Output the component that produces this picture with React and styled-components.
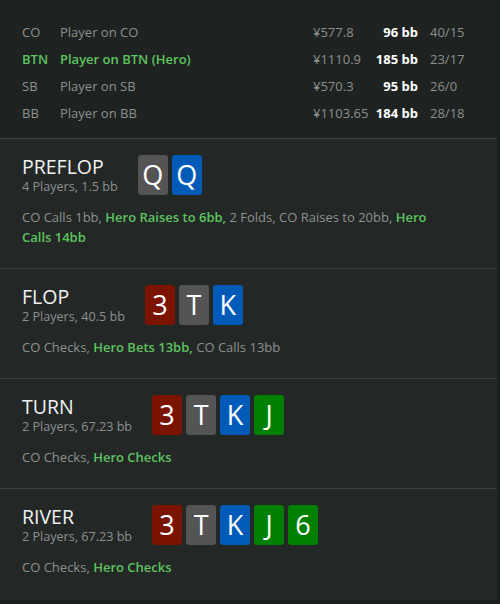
import React from "react";
import styled, { createGlobalStyle } from "styled-components";

const GlobalStyle = createGlobalStyle`
  html, body {
    margin: 0;
    padding: 0;
    background: #1b1f1e;
  }
  body {
    font-family: "Open Sans", "Noto Sans", sans-serif;
  }
`;

const players = [
  { pos: "CO", name: "Player on CO", money: "¥577.8", bb: "96 bb", ratio: "40/15" },
  { pos: "BTN", name: "Player on BTN (Hero)", money: "¥1110.9", bb: "185 bb", ratio: "23/17", hero: true },
  { pos: "SB", name: "Player on SB", money: "¥570.3", bb: "95 bb", ratio: "26/0" },
  { pos: "BB", name: "Player on BB", money: "¥1103.65", bb: "184 bb", ratio: "28/18" },
];

const streets = [
  {
    title: "PREFLOP",
    info: "4 Players, 1.5 bb",
    cards: [
      { rank: "Q", suit: "s" },
      { rank: "Q", suit: "d" },
    ],
    actions: [
      { text: "CO Calls 1bb" },
      { text: "Hero Raises to 6bb", hero: true },
      { text: "2 Folds" },
      { text: "CO Raises to 20bb" },
      { text: "Hero Calls 14bb", hero: true },
    ],
  },
  {
    title: "FLOP",
    info: "2 Players, 40.5 bb",
    cards: [
      { rank: "3", suit: "h" },
      { rank: "T", suit: "s" },
      { rank: "K", suit: "d" },
    ],
    actions: [
      { text: "CO Checks" },
      { text: "Hero Bets 13bb", hero: true },
      { text: "CO Calls 13bb" },
    ],
  },
  {
    title: "TURN",
    info: "2 Players, 67.23 bb",
    cards: [
      { rank: "3", suit: "h" },
      { rank: "T", suit: "s" },
      { rank: "K", suit: "d" },
      { rank: "J", suit: "c" },
    ],
    actions: [{ text: "CO Checks" }, { text: "Hero Checks", hero: true }],
  },
  {
    title: "RIVER",
    info: "2 Players, 67.23 bb",
    cards: [
      { rank: "3", suit: "h" },
      { rank: "T", suit: "s" },
      { rank: "K", suit: "d" },
      { rank: "J", suit: "c" },
      { rank: "6", suit: "c" },
    ],
    actions: [{ text: "CO Checks" }, { text: "Hero Checks", hero: true }],
  },
];

const suitColors = {
  h: "#7a1300",
  s: "#545454",
  d: "#005bb8",
  c: "#008000",
};

function App() {
  return (
    <>
      <GlobalStyle />
      <Panel>
        <PlayerTable>
          {players.map((p) => (
            <PlayerRow key={p.pos} hero={p.hero}>
              <Pos>{p.pos}</Pos>
              <Name>{p.name}</Name>
              <Money>{p.money}</Money>
              <Stack>{p.bb}</Stack>
              <Ratio>{p.ratio}</Ratio>
            </PlayerRow>
          ))}
        </PlayerTable>
        {streets.map((s) => (
          <Street key={s.title}>
            <StreetHeader>
              <StreetTitle>
                <h2>{s.title}</h2>
                <span>{s.info}</span>
              </StreetTitle>
              <Cards>
                {s.cards.map((c, i) => (
                  <Card key={i} suit={c.suit}>
                    {c.rank}
                  </Card>
                ))}
              </Cards>
            </StreetHeader>
            <Actions>
              {s.actions.map((a, i) => (
                <React.Fragment key={i}>
                  {a.hero ? <HeroAction>{a.text}</HeroAction> : a.text}
                  {i < s.actions.length - 1 && (a.hero ? <HeroAction>, </HeroAction> : ", ")}
                </React.Fragment>
              ))}
            </Actions>
          </Street>
        ))}
      </Panel>
    </>
  );
}

export default App;

const Panel = styled.div`
  width: 497px;
  height: 600px;
  background: #232827;
  overflow: hidden;
`;

const PlayerTable = styled.div`
  background: #1e2321;
  padding: 18px 0 12px 22px;
  border-bottom: 1px solid #3c413f;
`;

const PlayerRow = styled.div`
  display: grid;
  grid-template-columns: 38px 253px 62px 43px 60px;
  align-items: center;
  height: 27px;
  font-size: 13px;
  color: ${(props) => (props.hero ? "#5ec35e" : "#8c908e")};
  font-weight: ${(props) => (props.hero ? 600 : 400)};
`;

const Pos = styled.div``;
const Name = styled.div`
  white-space: nowrap;
`;
const Money = styled.div`
  color: #8c908e;
  font-weight: 400;
  white-space: nowrap;
`;
const Stack = styled.div`
  color: #ffffff;
  font-weight: 700;
  text-align: right;
  white-space: nowrap;
`;
const Ratio = styled.div`
  color: #8c908e;
  font-weight: 400;
  padding-left: 12px;
`;

const Street = styled.section`
  padding: 16px 22px 21px;
  border-bottom: 1px solid #3c413f;
  &:last-child {
    border-bottom: none;
  }
`;

const StreetHeader = styled.div`
  display: flex;
  align-items: flex-start;
  gap: 20px;
`;

const StreetTitle = styled.div`
  display: flex;
  flex-direction: column;
  padding-top: 1px;
  h2 {
    margin: 0;
    font-size: 19.5px;
    font-weight: 400;
    line-height: 22px;
    color: #f2f2f2;
  }
  span {
    font-size: 12.6px;
    line-height: 18px;
    color: #8c908e;
    white-space: nowrap;
  }
`;

const Cards = styled.div`
  display: flex;
  gap: 4px;
`;

const Card = styled.div`
  width: 30px;
  height: 40px;
  border-radius: 3px;
  background: ${(props) => suitColors[props.suit]};
  color: #ffffff;
  font-size: 27px;
  line-height: 40px;
  text-align: center;
`;

const Actions = styled.p`
  margin: 11px 0 0;
  max-width: 430px;
  font-size: 13px;
  line-height: 20px;
  color: #8c908e;
`;

const HeroAction = styled.span`
  color: #5ec35e;
  font-weight: 600;
`;
